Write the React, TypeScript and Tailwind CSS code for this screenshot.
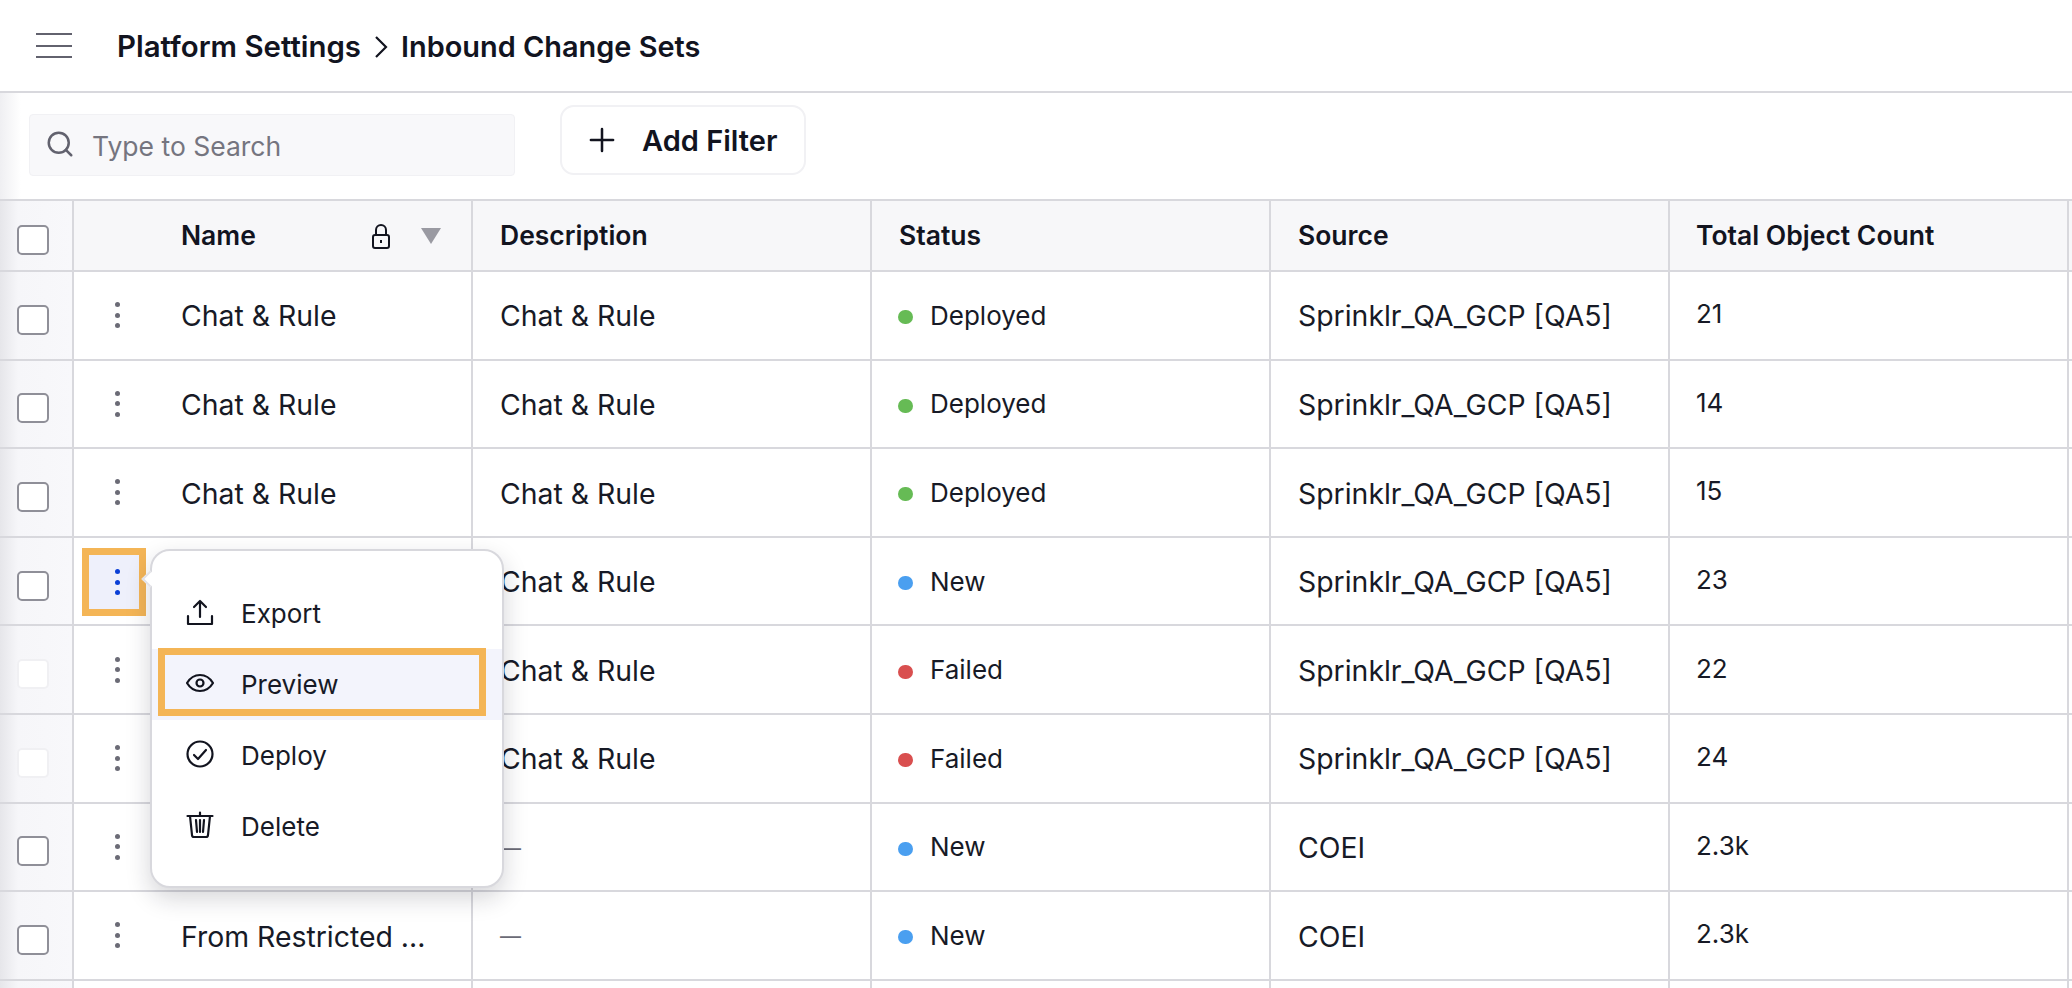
import { Plus, Search } from "lucide-react";

type Row = {
  name: string;
  description: string;
  status: "Deployed" | "New" | "Failed";
  source: string;
  count: string;
  active?: boolean;
  faded?: boolean;
};

const rows: Row[] = [
  { name: "Chat & Rule", description: "Chat & Rule", status: "Deployed", source: "Sprinklr_QA_GCP [QA5]", count: "21" },
  { name: "Chat & Rule", description: "Chat & Rule", status: "Deployed", source: "Sprinklr_QA_GCP [QA5]", count: "14" },
  { name: "Chat & Rule", description: "Chat & Rule", status: "Deployed", source: "Sprinklr_QA_GCP [QA5]", count: "15" },
  { name: "", description: "Chat & Rule", status: "New", source: "Sprinklr_QA_GCP [QA5]", count: "23", active: true },
  { name: "", description: "Chat & Rule", status: "Failed", source: "Sprinklr_QA_GCP [QA5]", count: "22", faded: true },
  { name: "", description: "Chat & Rule", status: "Failed", source: "Sprinklr_QA_GCP [QA5]", count: "24", faded: true },
  { name: "", description: "—", status: "New", source: "COEI", count: "2.3k" },
  { name: "From Restricted ...", description: "—", status: "New", source: "COEI", count: "2.3k" },
];

const statusDot = {
  Deployed: "bg-[#66bb55]",
  New: "bg-[#4a9ff0]",
  Failed: "bg-[#d94f4f]",
};

const gridCols = "grid grid-cols-[74px_399px_399px_399px_399px_399px_3px]";

function Kebab({ active }: { active?: boolean }) {
  const dot = active ? "bg-[#0a3fd6]" : "bg-[#6b6b76]";
  return (
    <div className="flex flex-col gap-[5.5px]">
      <span className={`w-[5px] h-[5px] rounded-full ${dot}`} />
      <span className={`w-[5px] h-[5px] rounded-full ${dot}`} />
      <span className={`w-[5px] h-[5px] rounded-full ${dot}`} />
    </div>
  );
}

function Checkbox({ faded }: { faded?: boolean }) {
  return (
    <div
      className={`w-[32px] h-[30px] mt-[9px] rounded-[5px] bg-white border-2 ${
        faded ? "border-[#f0f0f3]" : "border-[#8f8f98]"
      }`}
    />
  );
}

function LeftCell({ children }: { children: React.ReactNode }) {
  return (
    <div className="h-full flex items-center pl-[17px] border-r-2 border-[#d8d8dd] bg-gradient-to-r from-[#e6e6ea] via-[#f6f6f9] via-[25%] to-[#f8f8fb]">
      {children}
    </div>
  );
}

function MenuItem({
  label,
  icon,
  highlight,
}: {
  label: string;
  icon: React.ReactNode;
  highlight?: boolean;
}) {
  return (
    <div
      className={`h-[71px] flex items-center pl-[34px] gap-[27px] text-[26px] text-[#171a26] ${
        highlight ? "bg-[#f3f4fc]" : ""
      }`}
    >
      <span className="w-[28px] h-[28px] flex items-center justify-center -mt-[3px]">{icon}</span>
      <span>{label}</span>
    </div>
  );
}

const iconProps = {
  width: 28,
  height: 28,
  viewBox: "0 0 28 28",
  fill: "none",
  stroke: "#12141f",
  strokeWidth: 2.2,
  strokeLinecap: "round" as const,
  strokeLinejoin: "round" as const,
};

export default function App() {
  return (
    <div
      className="relative w-[2072px] h-[988px] overflow-hidden bg-white text-[#171a26]"
      style={{ fontFamily: "Inter, 'Noto Sans', sans-serif" }}
    >
      <header className="h-[93px] flex items-center border-b-2 border-[#d8d8dd] pl-[36px]">
        <div className="w-[36px] flex flex-col gap-[9.5px]">
          <span className="h-[2px] bg-[#62626e]" />
          <span className="h-[2px] bg-[#62626e]" />
          <span className="h-[2px] bg-[#62626e]" />
        </div>
        <div className="ml-[45px] mt-[3px] flex items-center text-[29.4px] font-semibold text-[#12141f]">
          <span>Platform Settings</span>
          <svg width="16" height="22" viewBox="0 0 16 22" fill="none" stroke="#12141f" strokeWidth="2.2" className="mx-[12px]">
            <path d="M3 1l10 10L3 21" />
          </svg>
          <span className="text-[28.9px]">Inbound Change Sets</span>
        </div>
      </header>

      <div className="h-[106px] flex items-start pl-[29px] bg-gradient-to-r from-[#efeff2] via-white via-[1%] to-white">
        <div className="mt-[21px] w-[486px] h-[62px] flex items-center rounded-[4px] bg-[#f8f8fa] border border-[#f1f1f4] pl-[15px] gap-[17px]">
          <Search size={30} strokeWidth={2} className="text-[#62626e] -mt-[2px]" />
          <span className="text-[26.5px] text-[#75757f] mt-[3px]">Type to Search</span>
        </div>
        <div className="mt-[12px] ml-[45px] w-[246px] h-[70px] flex items-center rounded-[14px] bg-white border-2 border-[#f1f1f4] pl-[21px] gap-[21px]">
          <Plus size={38} strokeWidth={1.6} className="text-[#12141f]" />
          <span className="text-[29px] font-semibold text-[#12141f] mt-[1px]">Add Filter</span>
        </div>
      </div>

      <div className="border-t-2 border-[#d8d8dd]">
        <div className={`${gridCols} h-[71px] border-b-2 border-[#d8d8dd] bg-[#f7f7f9] text-[26.5px] font-semibold text-[#12141f]`}>
          <LeftCell>
            <Checkbox />
          </LeftCell>
          <div className="flex items-center pl-[107px] pr-[30px] border-r-2 border-[#d8d8dd]">
            <span className="flex-1">Name</span>
            <svg width="22" height="26" viewBox="0 0 22 26" fill="none" stroke="#12141f" strokeWidth="2" className="mr-[29px]">
              <path d="M6 12V7a5 5 0 0 1 10 0v5" />
              <rect x="3" y="12" width="16" height="13" rx="2" />
              <path d="M11 17v3" />
            </svg>
            <span className="w-0 h-0 border-l-[10px] border-r-[10px] border-t-[16px] border-l-transparent border-r-transparent border-t-[#9a9aa2]" />
          </div>
          <div className="flex items-center pl-[27px] border-r-2 border-[#d8d8dd]">Description</div>
          <div className="flex items-center pl-[27px] border-r-2 border-[#d8d8dd]">Status</div>
          <div className="flex items-center pl-[27px] border-r-2 border-[#d8d8dd]">Source</div>
          <div className="flex items-center pl-[26px] border-r-2 border-[#d8d8dd]">Total Object Count</div>
          <div />
        </div>

        {rows.map((row, i) => (
          <div key={i} className={`${gridCols} h-[88.6px] border-b-2 border-[#d8d8dd] text-[28.4px]`}>
            <LeftCell>
              <Checkbox faded={row.faded} />
            </LeftCell>
            <div className="flex items-center border-r-2 border-[#d8d8dd]">
              <div className="w-[107px] pl-[41px] flex items-center">
                <Kebab active={row.active} />
              </div>
              <span className="mt-[3px]">{row.name}</span>
            </div>
            <div className="flex items-center pl-[27px] border-r-2 border-[#d8d8dd]">
              {row.description === "—" ? (
                <span className="mt-[3px] text-[21px] text-[#6b6b76]">{row.description}</span>
              ) : (
                <span className="mt-[3px]">{row.description}</span>
              )}
            </div>
            <div className="flex items-center pl-[26px] border-r-2 border-[#d8d8dd] text-[26px]">
              <span className={`w-[15px] h-[14px] mt-[4px] rounded-full ${statusDot[row.status]}`} />
              <span className="ml-[17px]">{row.status}</span>
            </div>
            <div className="flex items-center pl-[27px] border-r-2 border-[#d8d8dd]">
              <span className="mt-[3px]">{row.source}</span>
            </div>
            <div className="flex items-center pl-[26px] pb-[3px] border-r-2 border-[#d8d8dd] text-[26px]">{row.count}</div>
            <div />
          </div>
        ))}

        <div className={`${gridCols} h-[12px]`}>
          <LeftCell>
            <span />
          </LeftCell>
          <div className="border-r-2 border-[#d8d8dd]" />
          <div className="border-r-2 border-[#d8d8dd]" />
          <div className="border-r-2 border-[#d8d8dd]" />
          <div className="border-r-2 border-[#d8d8dd]" />
          <div className="border-r-2 border-[#d8d8dd]" />
          <div />
        </div>
      </div>

      {/* kebab annotation */}
      <div className="absolute left-[82px] top-[548px] w-[64px] h-[68px] border-[7px] border-[#f4b556] bg-[#eef0fb] flex items-center pl-[26px]">
        <Kebab active />
      </div>

      {/* action menu */}
      <div className="absolute left-[150px] top-[549px] w-[354px] h-[339px] rounded-[20px] bg-white border-2 border-[#d8d8dd] shadow-[0_10px_24px_rgba(20,20,40,0.18)] overflow-hidden">
        <div className="pt-[27px]">
          <MenuItem
            label="Export"
            icon={
              <svg {...iconProps}>
                <path d="M14 19V3M8 9l6-6 6 6M2 18v8h24v-8" />
              </svg>
            }
          />
          <MenuItem
            label="Preview"
            highlight
            icon={
              <svg {...iconProps}>
                <path d="M1 14c3-5 8-8 13-8s10 3 13 8c-3 5-8 8-13 8S4 19 1 14z" />
                <circle cx="14" cy="14" r="3.5" />
              </svg>
            }
          />
          <MenuItem
            label="Deploy"
            icon={
              <svg {...iconProps}>
                <circle cx="14" cy="14" r="12.5" />
                <path d="M8 15l4 4 8-9" />
              </svg>
            }
          />
          <MenuItem
            label="Delete"
            icon={
              <svg {...iconProps}>
                <path d="M1.5 5h25M14 1.5V5M4 5l2 19a2 2 0 0 0 2 2h12a2 2 0 0 0 2-2l2-19M10 9l1 12M14 9v12M18 9l-1 12" />
              </svg>
            }
          />
        </div>
      </div>
      <span className="absolute left-[144px] top-[573px] w-[12px] h-[12px] rotate-45 bg-white border-l-2 border-b-2 border-[#e2e2e6]" />

      {/* preview annotation */}
      <div className="absolute left-[158px] top-[648px] w-[328px] h-[68px] border-[7px] border-[#f4b556]" />
    </div>
  );
}
